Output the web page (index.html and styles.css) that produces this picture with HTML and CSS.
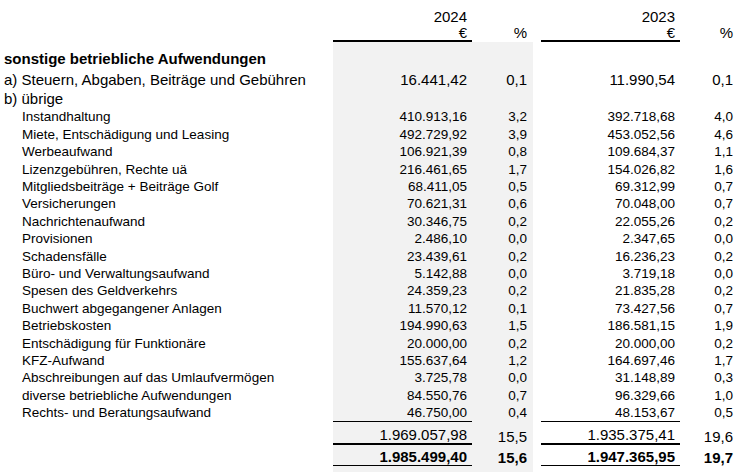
FILE: index.html
```html
<!DOCTYPE html>
<html lang="de">
<head>
<meta charset="utf-8">
<title>sonstige betriebliche Aufwendungen</title>
<link rel="stylesheet" href="styles.css">
</head>
<body>
<table class="report">
  <colgroup>
    <col class="c-label"><col class="c-amt"><col class="c-pct"><col class="c-gap"><col class="c-amt"><col class="c-pct2">
  </colgroup>
  <tbody>
    <tr class="h1"><td></td><td class="num amt">2024</td><td></td><td></td><td class="num amt">2023</td><td></td></tr>
    <tr class="h2"><td></td><td class="num amt rule-thick">€</td><td class="num pct">%</td><td></td><td class="num amt rule-thick">€</td><td class="num pct2">%</td></tr>
    <tr class="title"><td class="label">sonstige betriebliche Aufwendungen</td><td class="shade"></td><td class="shade"></td><td></td><td></td><td></td></tr>
    <tr class="main"><td class="label">a) Steuern, Abgaben, Beiträge und Gebühren</td><td class="num amt shade">16.441,42</td><td class="num pct shade">0,1</td><td></td><td class="num amt">11.990,54</td><td class="num pct2">0,1</td></tr>
    <tr class="sub"><td class="label">b) übrige</td><td class="shade"></td><td class="shade"></td><td></td><td></td><td></td></tr>
    <tr class="item"><td class="label">Instandhaltung</td><td class="num amt shade">410.913,16</td><td class="num pct shade">3,2</td><td></td><td class="num amt">392.718,68</td><td class="num pct2">4,0</td></tr>
    <tr class="item"><td class="label">Miete, Entschädigung und Leasing</td><td class="num amt shade">492.729,92</td><td class="num pct shade">3,9</td><td></td><td class="num amt">453.052,56</td><td class="num pct2">4,6</td></tr>
    <tr class="item"><td class="label">Werbeaufwand</td><td class="num amt shade">106.921,39</td><td class="num pct shade">0,8</td><td></td><td class="num amt">109.684,37</td><td class="num pct2">1,1</td></tr>
    <tr class="item"><td class="label">Lizenzgebühren, Rechte uä</td><td class="num amt shade">216.461,65</td><td class="num pct shade">1,7</td><td></td><td class="num amt">154.026,82</td><td class="num pct2">1,6</td></tr>
    <tr class="item"><td class="label">Mitgliedsbeiträge + Beiträge Golf</td><td class="num amt shade">68.411,05</td><td class="num pct shade">0,5</td><td></td><td class="num amt">69.312,99</td><td class="num pct2">0,7</td></tr>
    <tr class="item"><td class="label">Versicherungen</td><td class="num amt shade">70.621,31</td><td class="num pct shade">0,6</td><td></td><td class="num amt">70.048,00</td><td class="num pct2">0,7</td></tr>
    <tr class="item"><td class="label">Nachrichtenaufwand</td><td class="num amt shade">30.346,75</td><td class="num pct shade">0,2</td><td></td><td class="num amt">22.055,26</td><td class="num pct2">0,2</td></tr>
    <tr class="item"><td class="label">Provisionen</td><td class="num amt shade">2.486,10</td><td class="num pct shade">0,0</td><td></td><td class="num amt">2.347,65</td><td class="num pct2">0,0</td></tr>
    <tr class="item"><td class="label">Schadensfälle</td><td class="num amt shade">23.439,61</td><td class="num pct shade">0,2</td><td></td><td class="num amt">16.236,23</td><td class="num pct2">0,2</td></tr>
    <tr class="item"><td class="label">Büro- und Verwaltungsaufwand</td><td class="num amt shade">5.142,88</td><td class="num pct shade">0,0</td><td></td><td class="num amt">3.719,18</td><td class="num pct2">0,0</td></tr>
    <tr class="item"><td class="label">Spesen des Geldverkehrs</td><td class="num amt shade">24.359,23</td><td class="num pct shade">0,2</td><td></td><td class="num amt">21.835,28</td><td class="num pct2">0,2</td></tr>
    <tr class="item"><td class="label">Buchwert abgegangener Anlagen</td><td class="num amt shade">11.570,12</td><td class="num pct shade">0,1</td><td></td><td class="num amt">73.427,56</td><td class="num pct2">0,7</td></tr>
    <tr class="item"><td class="label">Betriebskosten</td><td class="num amt shade">194.990,63</td><td class="num pct shade">1,5</td><td></td><td class="num amt">186.581,15</td><td class="num pct2">1,9</td></tr>
    <tr class="item"><td class="label">Entschädigung für Funktionäre</td><td class="num amt shade">20.000,00</td><td class="num pct shade">0,2</td><td></td><td class="num amt">20.000,00</td><td class="num pct2">0,2</td></tr>
    <tr class="item"><td class="label">KFZ-Aufwand</td><td class="num amt shade">155.637,64</td><td class="num pct shade">1,2</td><td></td><td class="num amt">164.697,46</td><td class="num pct2">1,7</td></tr>
    <tr class="item"><td class="label">Abschreibungen auf das Umlaufvermögen</td><td class="num amt shade">3.725,78</td><td class="num pct shade">0,0</td><td></td><td class="num amt">31.148,89</td><td class="num pct2">0,3</td></tr>
    <tr class="item"><td class="label">diverse betriebliche Aufwendungen</td><td class="num amt shade">84.550,76</td><td class="num pct shade">0,7</td><td></td><td class="num amt">96.329,66</td><td class="num pct2">1,0</td></tr>
    <tr class="item"><td class="label">Rechts- und Beratungsaufwand</td><td class="num amt shade rule-thin">46.750,00</td><td class="num pct shade">0,4</td><td></td><td class="num amt rule-thin">48.153,67</td><td class="num pct2">0,5</td></tr>
    <tr class="subtotal"><td></td><td class="num amt shade rule-thick">1.969.057,98</td><td class="num pct shade">15,5</td><td></td><td class="num amt rule-thick">1.935.375,41</td><td class="num pct2">19,6</td></tr>
    <tr class="total"><td></td><td class="num amt shade rule-thin">1.985.499,40</td><td class="num pct shade">15,6</td><td></td><td class="num amt rule-thin">1.947.365,95</td><td class="num pct2">19,7</td></tr>
    <tr class="filler"><td></td><td class="shade"></td><td class="shade"></td><td></td><td></td><td></td></tr>
  </tbody>
</table>
</body>
</html>
```

FILE: styles.css
```css
html, body {
  margin: 0;
  padding: 0;
  background: #ffffff;
}

body {
  font-family: "Liberation Sans", Arial, sans-serif;
  color: #000000;
  overflow: hidden;
}

.report {
  table-layout: fixed;
  width: 740px;
  border-collapse: separate;
  border-spacing: 0;
  margin-top: 8px;
}

.c-label { width: 333px; }
.c-amt { width: 139px; }
.c-pct { width: 61px; }
.c-gap { width: 8px; }
.c-pct2 { width: 60px; }

.report td {
  box-sizing: border-box;
  padding: 0;
  white-space: nowrap;
  overflow: visible;
  vertical-align: middle;
}

.num { text-align: right; }
.amt { padding-right: 5px !important; }
.pct { padding-right: 6px !important; }
.pct2 { padding-right: 7px !important; }

.shade { background: #f2f2f2; }

.rule-thick { border-bottom: 2px solid #000000; }
.rule-thin { border-bottom: 1px solid #000000; }

.label { padding-left: 4px !important; }

.h1 td { height: 17px; font-size: 15px; line-height: 17px; }
.h2 td { height: 17px; font-size: 15px; line-height: 15px; vertical-align: top; }

.title td { height: 27px; font-size: 15px; line-height: 20px; vertical-align: bottom; }
.title .label { font-weight: bold; }

.main td { height: 21px; font-size: 15px; line-height: 21px; }
.sub td { height: 18.3px; font-size: 15px; line-height: 18px; }

.item td { height: 17.4px; font-size: 13.5px; line-height: 17px; }
.item .label { padding-left: 22px !important; }

.subtotal td { height: 23.5px; font-size: 15px; line-height: 16px; vertical-align: bottom; }
.total td { height: 21px; font-size: 15px; line-height: 16px; font-weight: bold; vertical-align: bottom; }

.filler td { height: 10px; }
```
